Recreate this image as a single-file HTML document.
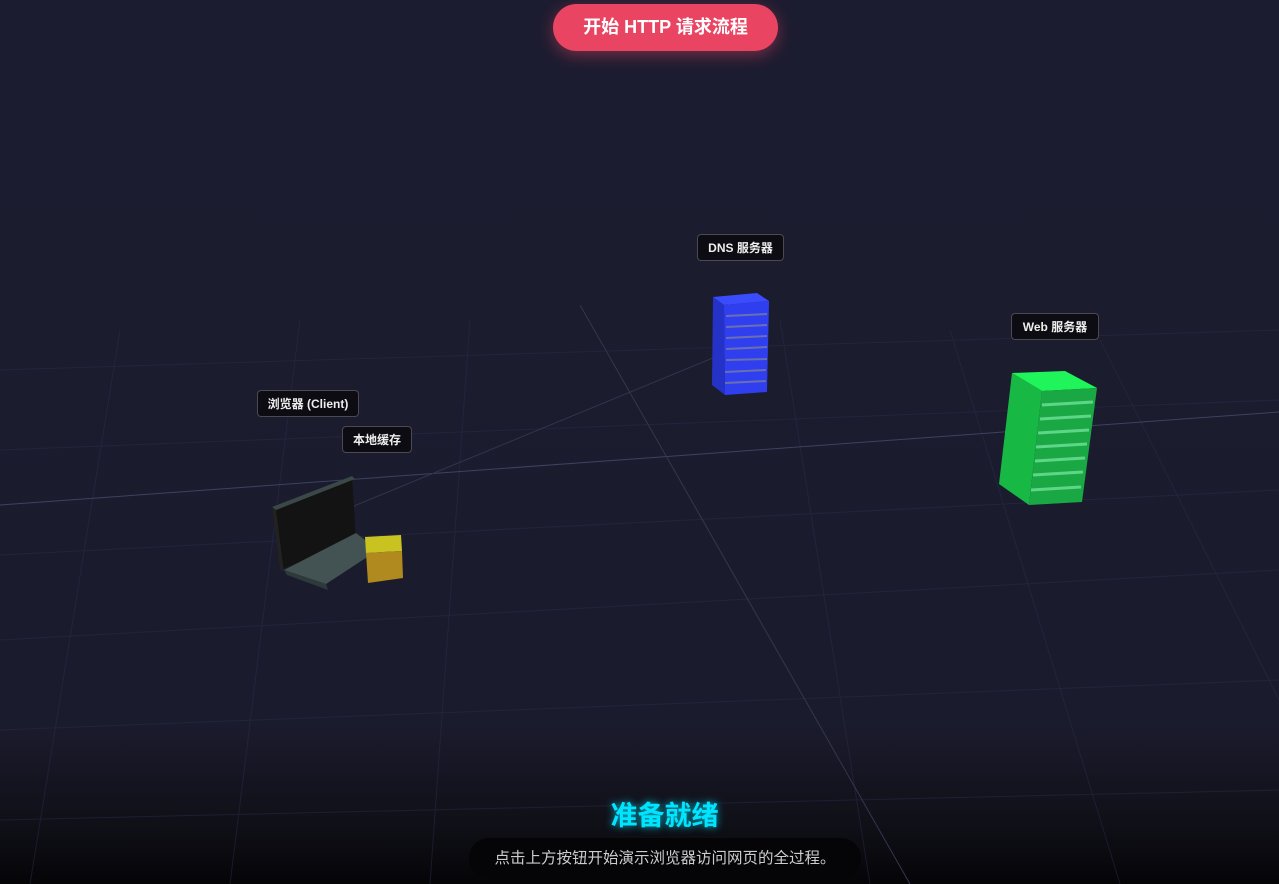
<!DOCTYPE html>
<html><head><meta charset="utf-8"><style>
html,body{margin:0;padding:0;width:1279px;height:884px;overflow:hidden;background:#1c1c2f;font-family:"Liberation Sans","Noto Sans CJK SC",sans-serif;}
.bg{position:absolute;inset:0;background:linear-gradient(180deg,#1c1c30 0%,#1b1b2e 82%,#101018 93%,#050508 100%);}
svg{position:absolute;left:0;top:0;}
.btn{position:absolute;left:553px;top:4px;width:225px;height:47px;border-radius:24px;background:#e94563;color:#fff;font-weight:bold;font-size:18px;line-height:47px;text-align:center;box-shadow:0 4px 16px rgba(233,69,99,0.45);}
.lbl{position:absolute;background:#0c0c12;border:1px solid #4a4a52;border-radius:4px;color:#eee;font-size:12px;font-weight:bold;height:27px;line-height:26px;text-align:center;box-sizing:border-box;white-space:nowrap;}
.title{position:absolute;left:50px;width:1229px;top:794px;text-align:center;color:#00e5ff;font-weight:bold;font-size:27px;text-shadow:0 0 8px #00bcd4;}
.desc{position:absolute;left:469px;top:838px;width:392px;height:41px;border-radius:20px;background:#050507;color:#ccc;font-size:15.5px;line-height:41px;text-align:center;}
</style></head><body>
<div class="bg"></div>
<svg width="1279" height="884" viewBox="0 0 1279 884">
<g stroke="#2a3050" stroke-width="1" fill="none" opacity="0.45">
<line x1="0" y1="370" x2="1279" y2="330"/>
<line x1="0" y1="450" x2="1279" y2="400"/>
<line x1="0" y1="555" x2="1279" y2="490"/>
<line x1="0" y1="640" x2="1279" y2="570"/>
<line x1="0" y1="730" x2="1279" y2="680"/>
<line x1="0" y1="820" x2="1279" y2="790"/>
<line x1="120" y1="330" x2="30" y2="884"/>
<line x1="300" y1="320" x2="230" y2="884"/>
<line x1="470" y1="320" x2="430" y2="884"/>
<line x1="780" y1="320" x2="870" y2="884"/>
<line x1="950" y1="330" x2="1120" y2="884"/>
<line x1="1100" y1="340" x2="1279" y2="700"/>
</g>
<line x1="0" y1="505" x2="1279" y2="412" stroke="#3e4260" stroke-width="1"/>
<line x1="580" y1="305" x2="910" y2="884" stroke="#33374f" stroke-width="1"/>
<line x1="320" y1="520" x2="720" y2="355" stroke="#30344c" stroke-width="1"/>
<!-- laptop -->
<polygon points="272,507 352,476 356,540 280,570" fill="#131313"/>
<polygon points="272,507 352,476 355,479 276,510" fill="#3a4848"/>
<polygon points="272,507 276,510 284,572 280,570" fill="#222"/>
<polygon points="284,570 356,533 378,550 326,584" fill="#435252"/>
<polygon points="284,570 326,584 328,590 287,575" fill="#2e3a3a"/>
<!-- cache cube -->
<polygon points="365,537 401,535 402,551 366,553" fill="#c9c322"/>
<polygon points="366,553 402,551 403,578 368,583" fill="#b08a1e"/>
<!-- DNS server -->
<polygon points="713,297 757,293 769,301 724,305" fill="#3b4cff"/>
<polygon points="713,297 724,305 725,395 712,385" fill="#2532c8"/>
<polygon points="724,305 769,301 767,392 725,395" fill="#2f3ff0"/>
<g stroke="#6a6fb0" stroke-width="2">
<line x1="726" y1="316" x2="767" y2="314"/><line x1="726" y1="327" x2="767" y2="325"/>
<line x1="726" y1="338" x2="767" y2="336"/><line x1="726" y1="349" x2="767" y2="347"/>
<line x1="726" y1="360" x2="767" y2="359"/><line x1="725" y1="372" x2="766" y2="370"/>
<line x1="725" y1="383" x2="766" y2="381"/></g>
<!-- Web server -->
<polygon points="1012,373 1065,371 1097,388 1042,391" fill="#1ff55a"/>
<polygon points="1012,373 1042,391 1029,505 999,484" fill="#17b844"/>
<polygon points="1042,391 1097,388 1082,502 1029,505" fill="#1aa844"/>
<g stroke="#5ed687" stroke-width="3">
<line x1="1042" y1="405" x2="1093" y2="402"/><line x1="1040" y1="419" x2="1091" y2="416"/>
<line x1="1038" y1="433" x2="1089" y2="430"/><line x1="1036" y1="447" x2="1087" y2="444"/>
<line x1="1035" y1="461" x2="1085" y2="458"/><line x1="1033" y1="475" x2="1083" y2="472"/>
<line x1="1031" y1="490" x2="1081" y2="487"/></g>
</svg>
<div class="btn">开始 HTTP 请求流程</div>
<div class="lbl" style="left:697px;top:234px;width:87px;">DNS 服务器</div>
<div class="lbl" style="left:1011px;top:313px;width:88px;">Web 服务器</div>
<div class="lbl" style="left:257px;top:390px;width:102px;">浏览器 (Client)</div>
<div class="lbl" style="left:342px;top:426px;width:70px;">本地缓存</div>
<div class="title">准备就绪</div>
<div class="desc">点击上方按钮开始演示浏览器访问网页的全过程。</div>
</body></html>
